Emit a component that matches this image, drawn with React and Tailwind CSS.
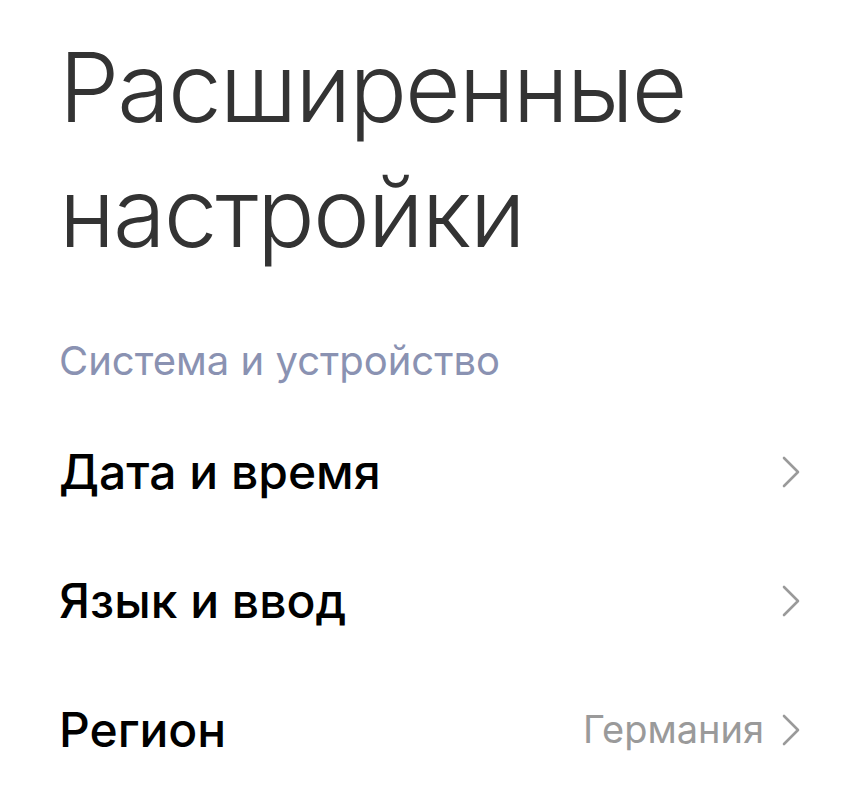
import React from "react";

const rows = [
  { label: "Дата и время" },
  { label: "Язык и ввод" },
  { label: "Регион", value: "Германия" },
];

const Chevron = () => (
  <svg width="18" height="32" viewBox="0 0 18 32" fill="none" className="shrink-0">
    <path d="M2 2 L16 16 L2 30" stroke="#9a9a9a" strokeWidth="2.6" strokeLinecap="round" strokeLinejoin="round" />
  </svg>
);

export default function App() {
  return (
    <div className="min-h-screen w-full bg-white font-['Inter',sans-serif]">
      <div className="pl-[59px] pr-[46px] pt-[25px]">
        <h1 className="text-[96px] leading-[125px] font-light text-[#333333] tracking-[-2px]">
          Расширенные
          <br />
          настройки
        </h1>
        <div className="mt-[62px] text-[40px] leading-[48px] text-[#8a92b2]">Система и устройство</div>
        <div className="mt-[22px] flex flex-col">
          {rows.map((row) => (
            <div key={row.label} className="flex h-[129px] items-center justify-between">
              <span className="text-[48px] font-[450] text-black">{row.label}</span>
              <div className="flex items-center gap-[18px]">
                {row.value && <span className="text-[38px] text-[#9a9a9a]">{row.value}</span>}
                <Chevron />
              </div>
            </div>
          ))}
        </div>
      </div>
    </div>
  );
}
